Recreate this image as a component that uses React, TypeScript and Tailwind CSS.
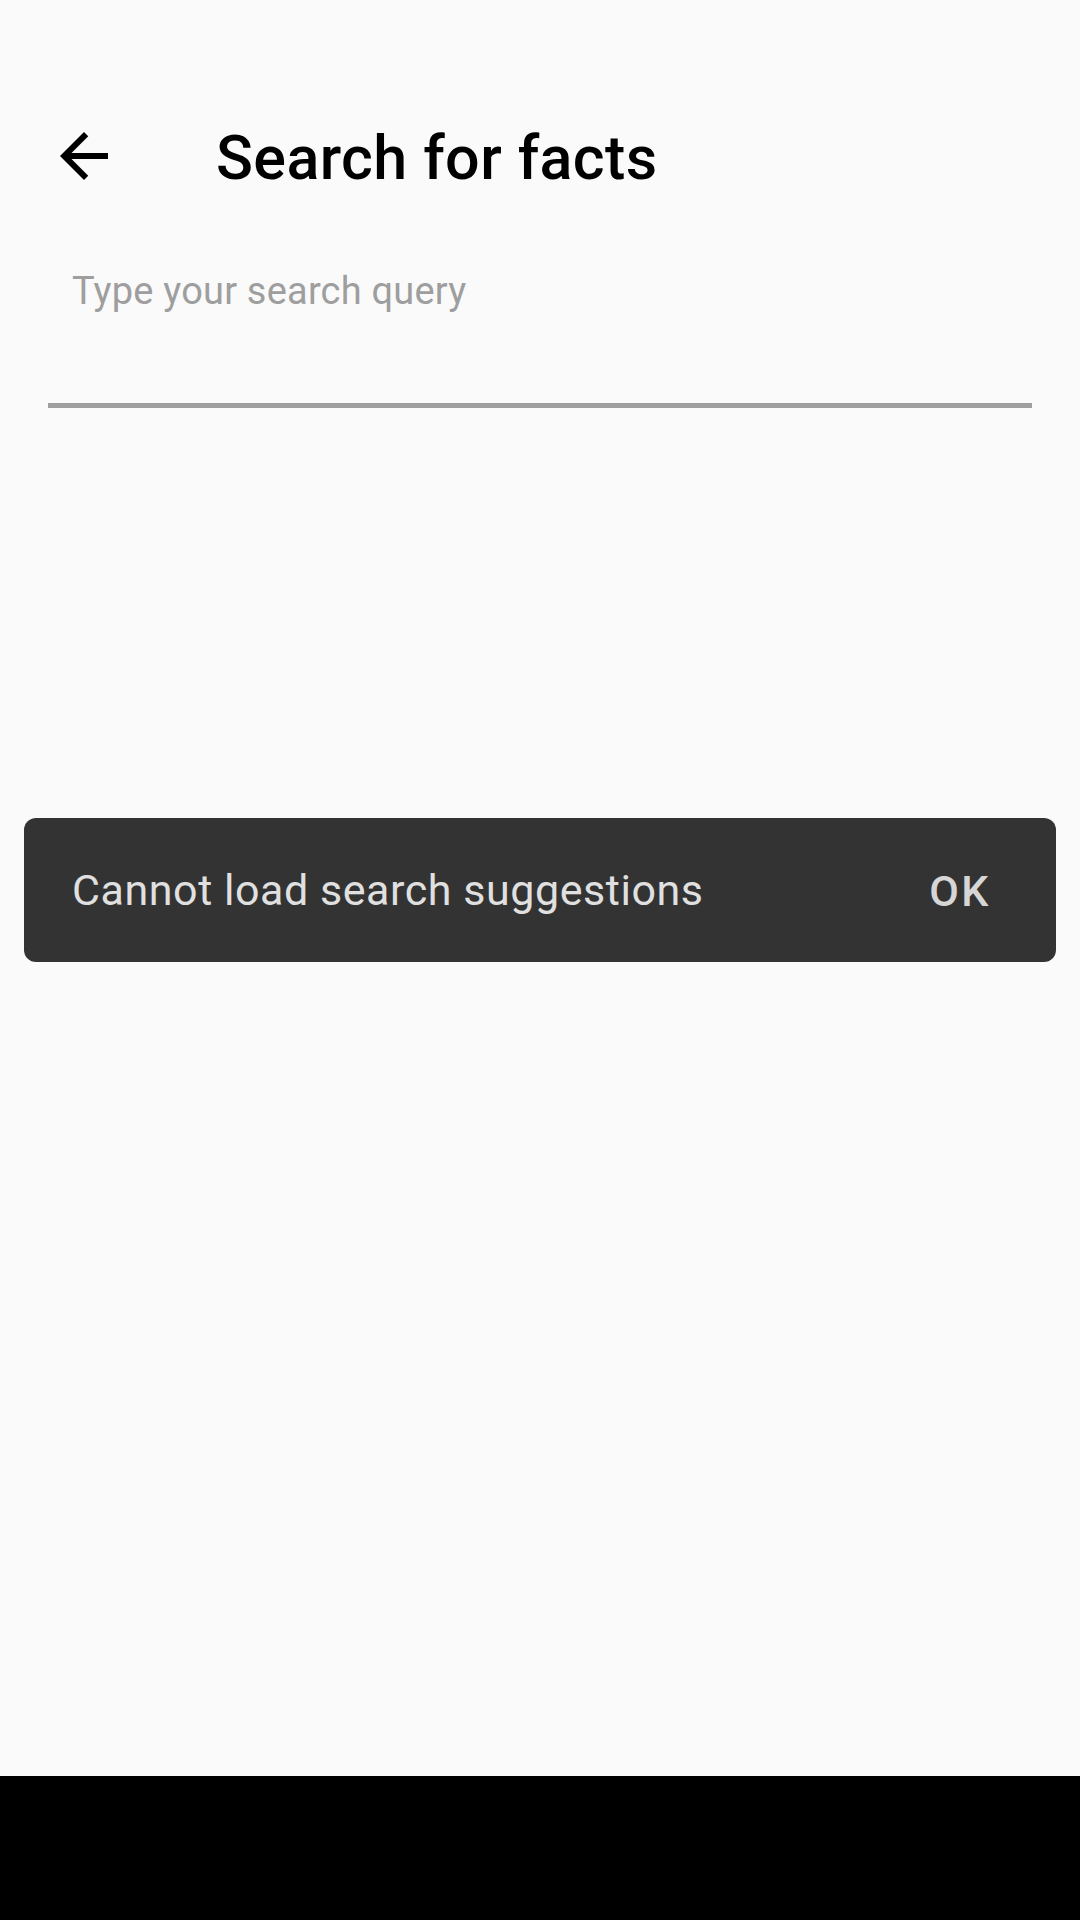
export default function App() {
  return (
    <div
      className="relative w-[1080px] h-[1920px] bg-[#fafafa] flex flex-col"
      style={{ fontFamily: "Roboto, 'Noto Sans', sans-serif" }}
    >
      {/* status bar */}
      <div className="h-[72px]" />

      {/* toolbar */}
      <div className="h-[168px] flex items-center">
        <div className="w-[168px] pl-[48px] flex items-center">
          <svg width="72" height="72" viewBox="0 0 24 24" fill="#000">
            <path d="M20 11H7.83l5.59-5.59L12 4l-8 8 8 8 1.41-1.41L7.83 13H20v-2z" />
          </svg>
        </div>
        <h1 className="ml-[48px] mt-[5px] text-[61px] font-medium text-black leading-none tracking-[0.4px]">
          Search for facts
        </h1>
      </div>

      {/* search field */}
      <div className="mx-[48px] pt-[21px]">
        <div className="pl-[24px] text-[38px] leading-[60px] text-[#9e9e9e] tracking-[0.2px]">
          Type your search query
        </div>
        <div className="mt-[82px] h-[5px] bg-[#9e9e9e]" />
      </div>

      <div className="flex-1" />

      {/* nav bar */}
      <div className="h-[144px] bg-black" />

      {/* snackbar */}
      <div className="absolute left-[24px] right-[24px] top-[818px] h-[144px] rounded-[12px] bg-[#333333] flex items-center justify-between pl-[48px] pr-[65px]">
        <span className="text-[43px] text-[#e0e0e0] tracking-[0.55px]">Cannot load search suggestions</span>
        <span className="mt-[2px] text-[43px] font-medium text-[#d6d6d6] tracking-[2.5px]">OK</span>
      </div>
    </div>
  )
}
